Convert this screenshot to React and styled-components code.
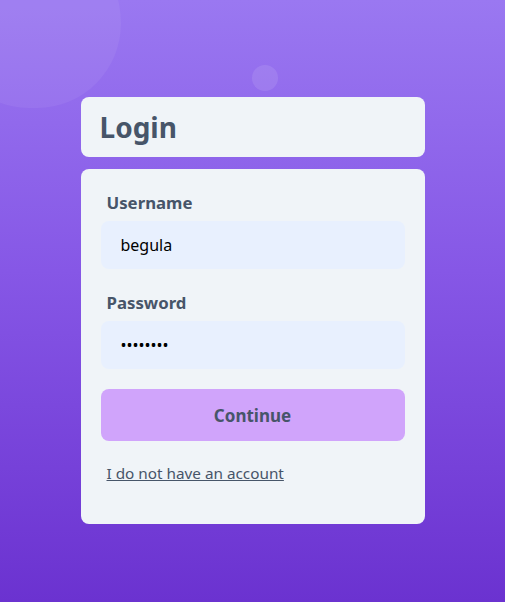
import React from "react";
import styled, { createGlobalStyle } from "styled-components";

const GlobalStyle = createGlobalStyle`
  html, body {
    margin: 0;
    padding: 0;
  }
  body {
    font-family: "Noto Sans", "Open Sans", sans-serif;
  }
`;

const Page = styled.div`
  position: relative;
  overflow: hidden;
  min-height: 602px;
  box-sizing: border-box;
  padding-top: 97px;
  background: linear-gradient(180deg, #9a78f1 0%, #8657e6 45%, #6b32d0 100%);
`;

const Blob = styled.div`
  position: absolute;
  border-radius: ${(p) => p.$radius || "50%"};
  background: rgba(255, 255, 255, ${(p) => p.$alpha});
`;

const Column = styled.div`
  position: relative;
  width: 344px;
  margin: 0 auto;
  display: flex;
  flex-direction: column;
  gap: 12px;
`;

const Header = styled.div`
  height: 60px;
  display: flex;
  align-items: center;
  padding: 0 19px;
  background: #f0f4f8;
  border-radius: 8px;
`;

const Title = styled.h1`
  margin: 0;
  font-size: 28px;
  font-weight: 700;
  color: #475569;
`;

const Card = styled.form`
  background: #f0f4f8;
  border-radius: 8px;
  padding: 22px 20px 39px;
  display: flex;
  flex-direction: column;
`;

const Field = styled.div`
  display: flex;
  flex-direction: column;
  gap: 6px;
  margin-bottom: ${(p) => p.$space || 22}px;
`;

const Label = styled.label`
  padding-left: 6px;
  font-size: 16.8px;
  line-height: 24px;
  font-weight: 700;
  color: #475569;
`;

const Input = styled.input`
  height: 48px;
  box-sizing: border-box;
  border: none;
  outline: none;
  border-radius: 8px;
  padding: 0 20px;
  background: #e8f0fe;
  font-family: inherit;
  font-size: 16px;
  color: #000;
`;

const Button = styled.button`
  height: 52px;
  border: none;
  border-radius: 8px;
  background: #d0a4fb;
  font-family: inherit;
  font-size: 17px;
  font-weight: 700;
  color: #475569;
  cursor: pointer;
`;

const Link = styled.a`
  margin-top: 20px;
  padding-left: 6px;
  font-size: 15.3px;
  line-height: 24px;
  color: #475569;
  text-decoration: underline;
  cursor: pointer;
`;

export default function App() {
  return (
    <>
      <GlobalStyle />
      <Page>
        <Blob
          $alpha={0.06}
          $radius="45% 55% 50% 50%"
          style={{ left: -55, top: -70, width: 176, height: 178 }}
        />
        <Blob $alpha={0.1} style={{ left: 252, top: 65, width: 26, height: 26 }} />
        <Column>
          <Header>
            <Title>Login</Title>
          </Header>
          <Card onSubmit={(e) => e.preventDefault()}>
            <Field>
              <Label htmlFor="username">Username</Label>
              <Input id="username" type="text" defaultValue="begula" />
            </Field>
            <Field $space={20}>
              <Label htmlFor="password">Password</Label>
              <Input id="password" type="password" defaultValue="12345678" />
            </Field>
            <Button type="submit">Continue</Button>
            <Link>I do not have an account</Link>
          </Card>
        </Column>
      </Page>
    </>
  );
}
